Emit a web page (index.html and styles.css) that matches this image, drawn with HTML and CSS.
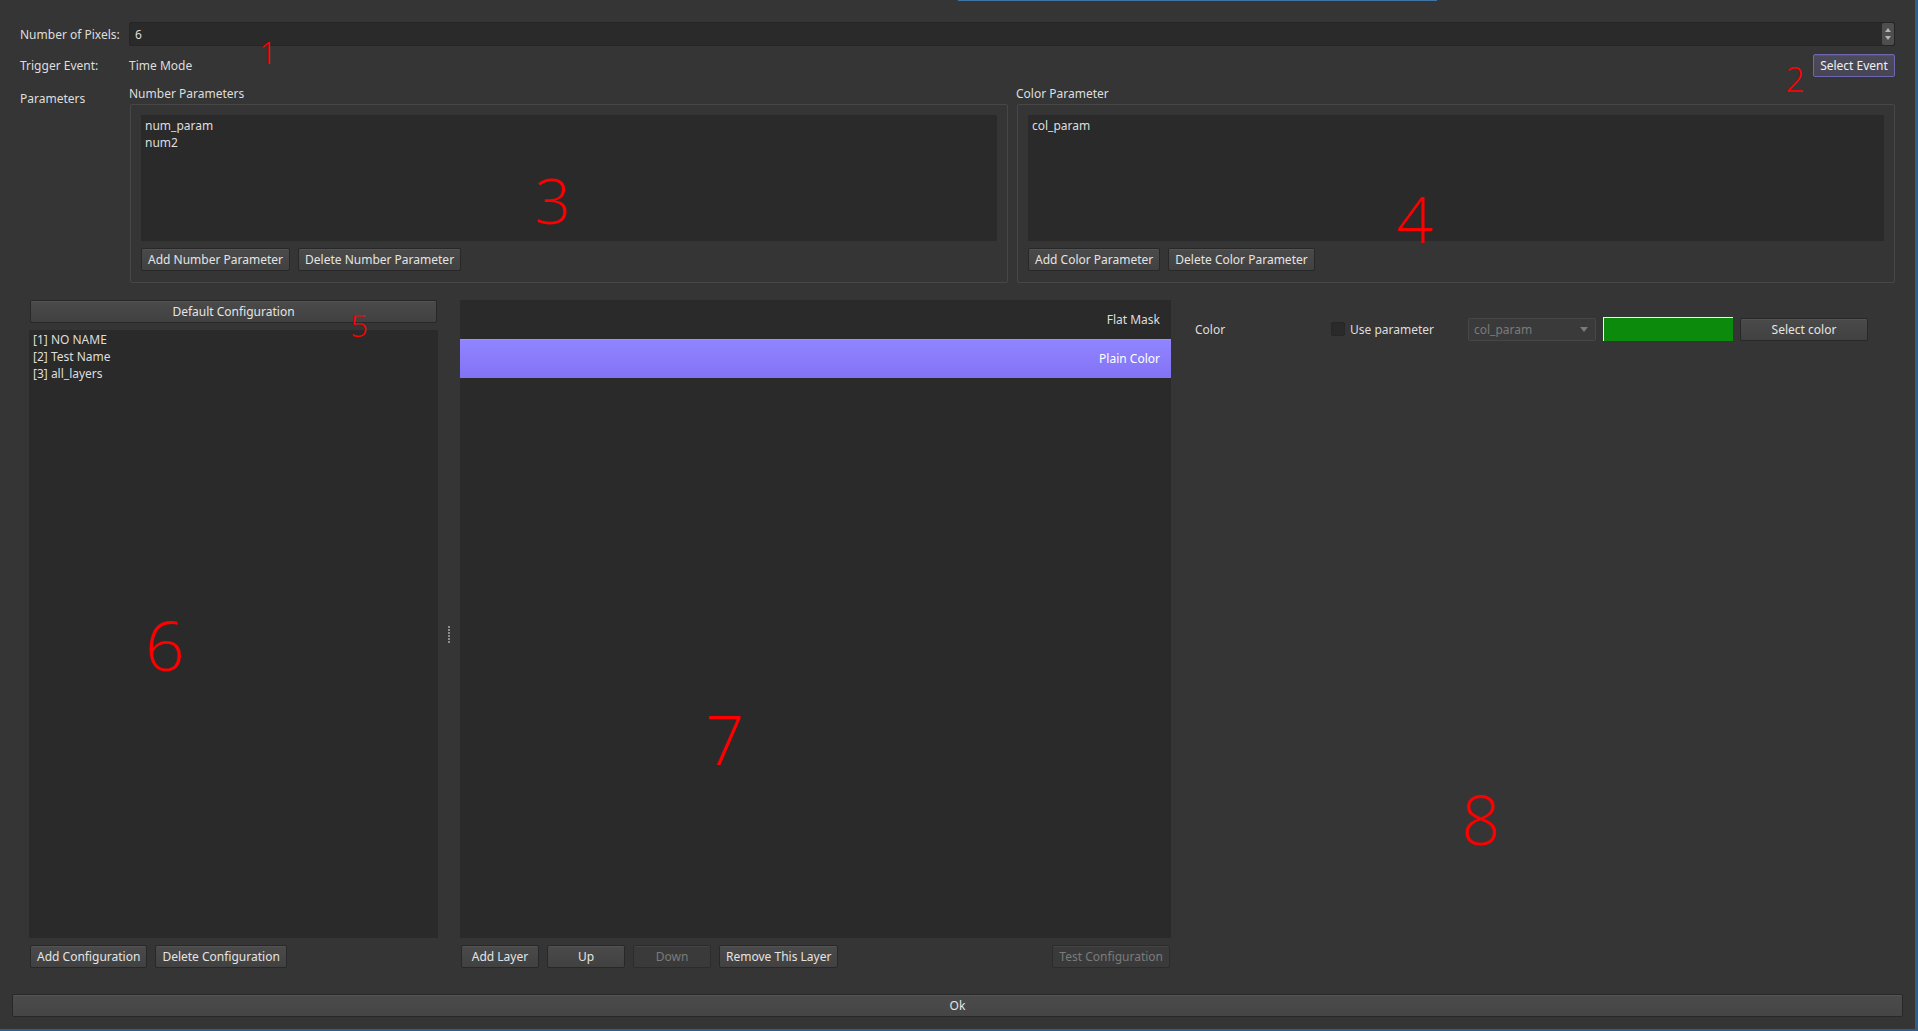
FILE: index.html
```html
<!DOCTYPE html>
<html lang="en">
<head>
  <meta charset="UTF-8">
  <meta name="viewport" content="width=device-width, initial-scale=1.0">
  <title>Layer Configuration</title>
  <link rel="stylesheet" href="styles.css">
</head>
<body>
  <div class="window">
    <div class="titlebar"><span class="title-accent"></span></div>

    <div class="settings">
      <div class="form-row row-pixels">
        <span class="form-label">Number of Pixels:</span>
        <div class="spinbox">
          <span class="spin-value">6</span>
          <span class="spin-arrows">
            <svg width="12" height="22" viewBox="0 0 12 22">
              <path d="M3 9 L6 5 L9 9 Z" fill="#b4b4b4"/>
              <path d="M3 13 L6 17 L9 13 Z" fill="#b4b4b4"/>
            </svg>
          </span>
        </div>
      </div>

      <div class="form-row row-trigger">
        <span class="form-label">Trigger Event:</span>
        <span class="trigger-value">Time Mode</span>
        <button class="btn btn-focus">Select Event</button>
      </div>

      <div class="form-row row-params">
        <span class="form-label label-params">Parameters</span>
        <div class="params">
          <div class="param-col">
            <span class="param-title">Number Parameters</span>
            <div class="group">
              <ul class="list param-list">
                <li>num_param</li>
                <li>num2</li>
              </ul>
              <div class="btn-row">
                <button class="btn">Add Number Parameter</button>
                <button class="btn">Delete Number Parameter</button>
              </div>
            </div>
          </div>
          <div class="param-col">
            <span class="param-title">Color Parameter</span>
            <div class="group">
              <ul class="list param-list">
                <li>col_param</li>
              </ul>
              <div class="btn-row">
                <button class="btn">Add Color Parameter</button>
                <button class="btn">Delete Color Parameter</button>
              </div>
            </div>
          </div>
        </div>
      </div>
    </div>

    <div class="workspace">
      <div class="config-col">
        <button class="btn btn-wide">Default Configuration</button>
        <ul class="list config-list">
          <li>[1] NO NAME</li>
          <li>[2] Test Name</li>
          <li>[3] all_layers</li>
        </ul>
        <div class="btn-row">
          <button class="btn">Add Configuration</button>
          <button class="btn">Delete Configuration</button>
        </div>
      </div>

      <div class="splitter"><span class="grip"></span></div>

      <div class="layer-col">
        <ul class="list layer-list">
          <li>Flat Mask</li>
          <li class="selected">Plain Color</li>
        </ul>
        <div class="btn-row">
          <button class="btn btn-min">Add Layer</button>
          <button class="btn btn-min">Up</button>
          <button class="btn btn-min" disabled>Down</button>
          <button class="btn">Remove This Layer</button>
          <span class="spacer"></span>
          <button class="btn" disabled>Test Configuration</button>
        </div>
      </div>

      <div class="props">
        <div class="prop-row">
          <span class="prop-label">Color</span>
          <label class="check"><span class="check-box"></span>Use parameter</label>
          <div class="combo">
            <span>col_param</span>
            <svg width="8" height="5" viewBox="0 0 8 5"><path d="M0 0 L8 0 L4 5 Z" fill="#7a7a7a"/></svg>
          </div>
          <div class="swatch"></div>
          <button class="btn btn-color">Select color</button>
        </div>
      </div>
    </div>

    <div class="footer">
      <button class="btn btn-ok">Ok</button>
    </div>

    <span class="mark mark-1">1</span>
    <span class="mark mark-2">2</span>
    <span class="mark mark-3">3</span>
    <span class="mark mark-4">4</span>
    <span class="mark mark-5">5</span>
    <span class="mark mark-6">6</span>
    <span class="mark mark-7">7</span>
    <span class="mark mark-8">8</span>
  </div>
</body>
</html>
```

FILE: styles.css
```css
* {
  margin: 0;
  padding: 0;
  box-sizing: border-box;
}
body {
  background: #2d5f8c;
  font-family: "Noto Sans", "DejaVu Sans", sans-serif;
  font-size: 12px;
  color: #dedede;
}
.window {
  position: relative;
  width: 1915px;
  height: 1029px;
  background: #353535;
  display: flex;
  flex-direction: column;
}
.titlebar {
  height: 22px;
}
.title-accent {
  display: block;
  margin-left: 958px;
  width: 479px;
  height: 1px;
  background: #3f74a3;
}

/* top form */
.settings {
  padding: 0 20px;
}
.form-row {
  display: flex;
  align-items: center;
}
.form-label {
  width: 109px;
  flex-shrink: 0;
}
.row-pixels {
  height: 24px;
}
.spinbox {
  flex: 1;
  height: 24px;
  display: flex;
  align-items: center;
  justify-content: space-between;
  background: #2a2a2a;
  border: 1px solid #252525;
  border-radius: 2px;
  padding-left: 5px;
}
.spin-arrows {
  display: flex;
  width: 12px;
  height: 22px;
  background: #4e4e4e;
  border-radius: 2px;
}
.row-trigger {
  margin-top: 8px;
  height: 23px;
}
.trigger-value {
  flex: 1;
}
.row-params {
  margin-top: 8px;
  align-items: flex-start;
}
.label-params {
  padding-top: 5px;
  line-height: 17px;
}
.params {
  flex: 1;
  display: grid;
  grid-template-columns: 1fr 1fr;
  column-gap: 8px;
}
.param-title {
  display: block;
  line-height: 17px;
  margin-bottom: 2px;
}
.group {
  border: 1px solid #474747;
  border-radius: 2px;
  padding: 10px 10px 11px 10px;
  margin-left: 1px;
}

/* buttons */
.btn {
  font: inherit;
  color: #e4e4e4;
  height: 23px;
  padding: 0 6px;
  background: linear-gradient(#4a4a4a, #414141);
  border: 1px solid #282828;
  border-radius: 2px;
  box-shadow: inset 0 1px 0 rgba(255, 255, 255, 0.05);
  white-space: nowrap;
}
.btn:disabled {
  color: #7a7a7a;
  background: #3a3a3a;
  border-color: #2c2c2c;
}
.btn-focus {
  width: 82px;
  border-color: #6d66b0;
  background: linear-gradient(#4d4b5a, #474553);
  color: #f0f0f0;
}
.btn-min {
  min-width: 78px;
}
.btn-row {
  display: flex;
  gap: 8px;
  margin-top: 7px;
}
.spacer {
  flex: 1;
}

/* lists */
.list {
  list-style: none;
  background: #2a2a2a;
}
.param-list {
  height: 126px;
  padding: 2px 4px;
  line-height: 17px;
}

/* lower area */
.workspace {
  display: flex;
  height: 668px;
  margin-top: 17px;
  padding-left: 29px;
}
.config-col {
  width: 409px;
  display: flex;
  flex-direction: column;
}
.btn-wide {
  width: 407px;
  margin-left: 1px;
}
.config-list {
  flex: 1;
  margin-top: 7px;
  padding: 1px 4px;
  line-height: 17px;
}
.config-col .btn-row {
  padding-left: 1px;
}
.splitter {
  width: 22px;
  display: flex;
  align-items: center;
  justify-content: center;
}
.grip {
  width: 2px;
  height: 17px;
  background: repeating-linear-gradient(#8c8c8c 0 2px, transparent 2px 3px);
}
.layer-col {
  width: 711px;
  display: flex;
  flex-direction: column;
}
.layer-list {
  flex: 1;
}
.layer-list li {
  height: 39px;
  line-height: 40px;
  text-align: right;
  padding-right: 11px;
}
.layer-list li.selected {
  line-height: 38px;
  background: linear-gradient(#9184ff, #8273f5);
  border-top: 1px solid #9a8fff;
  color: #ffffff;
}
.layer-col .btn-row {
  padding-left: 1px;
  padding-right: 1px;
}

/* properties */
.props {
  flex: 1;
  padding: 17px 0 0 24px;
}
.prop-row {
  display: flex;
  align-items: center;
  height: 24px;
}
.prop-label {
  width: 136px;
}
.check {
  width: 137px;
  display: flex;
  align-items: center;
}
.check-box {
  width: 14px;
  height: 14px;
  background: #2a2a2a;
  border: 1px solid #262626;
  border-radius: 2px;
  margin-right: 5px;
}
.combo {
  width: 128px;
  height: 23px;
  display: flex;
  align-items: center;
  justify-content: space-between;
  padding: 0 7px 0 5px;
  background: #3a3a3a;
  border: 1px solid #474747;
  border-radius: 2px;
  color: #7a7a7a;
}
.swatch {
  width: 130px;
  height: 24px;
  margin-left: 7px;
  background: #0c8a0c;
  border-top: 1px solid #f0f0f0;
  border-left: 1px solid #f0f0f0;
}
.btn-color {
  width: 128px;
  margin-left: 7px;
}

/* footer */
.footer {
  padding: 26px 12px 0;
}
.btn-ok {
  width: 100%;
  background: linear-gradient(#4b4b4b, #454545);
}

/* red annotation numbers */
.mark {
  position: absolute;
  transform: translate(-50%, -50%);
  line-height: 1;
  color: #ff0000;
  font-family: "Open Sans", "Noto Sans", sans-serif;
  font-weight: 300;
}
.mark-1 { left: 268px; top: 52px; font-size: 31px; }
.mark-2 { left: 1795px; top: 79px; font-size: 34px; }
.mark-3 { left: 553px; top: 199px; font-size: 63px; }
.mark-4 { left: 1415px; top: 219px; font-size: 64px; }
.mark-5 { left: 359px; top: 325px; font-size: 31px; }
.mark-6 { left: 165px; top: 644px; font-size: 69px; }
.mark-7 { left: 725px; top: 739px; font-size: 68px; }
.mark-8 { left: 1481px; top: 819px; font-size: 68px; }
```
